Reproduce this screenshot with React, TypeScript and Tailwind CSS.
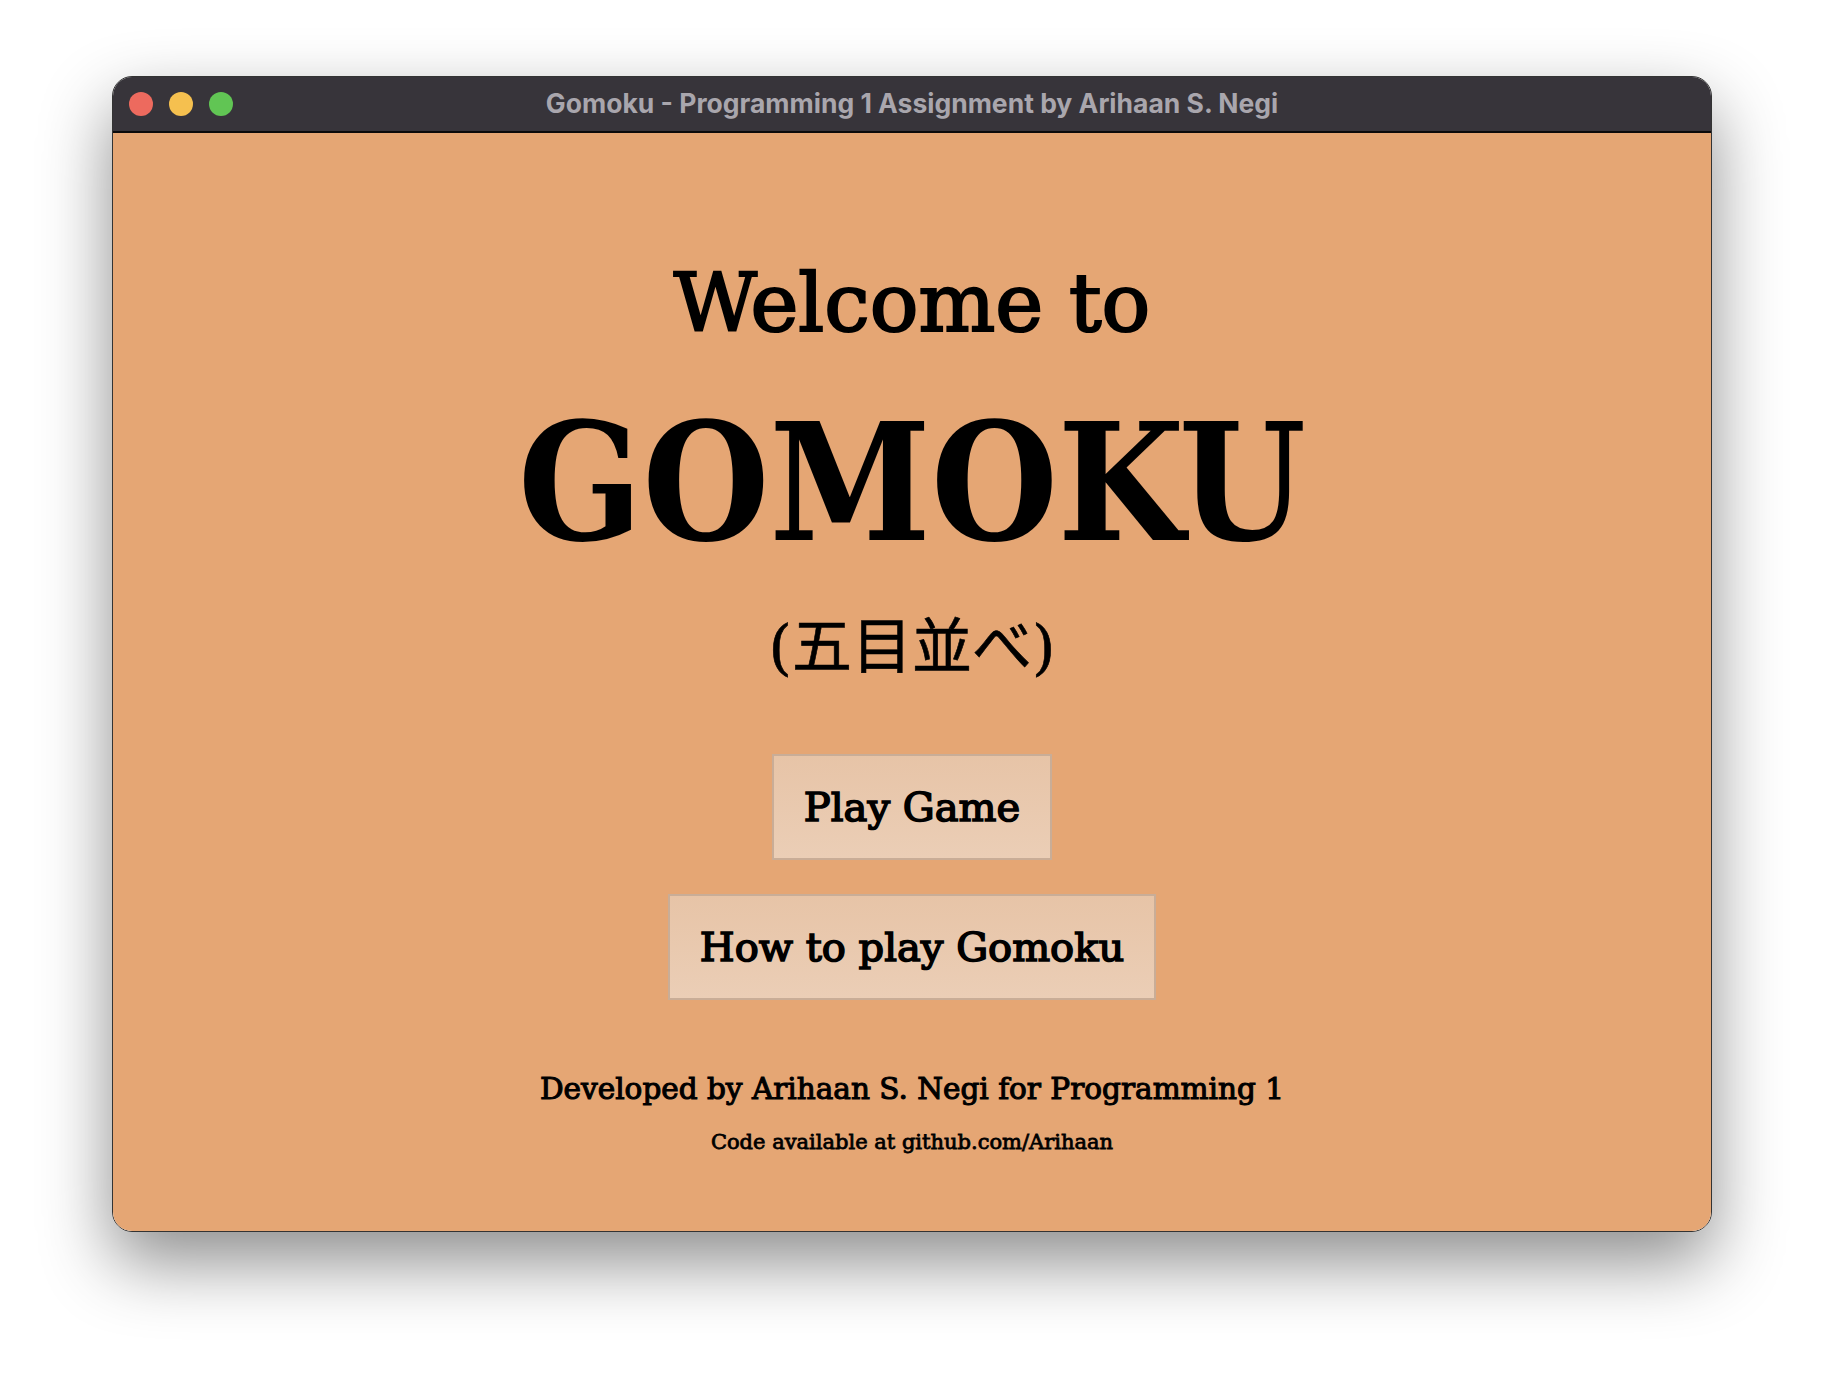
import React from 'react';

const slab = { fontFamily: '"DejaVu Serif", "Liberation Serif", serif' };

function TrafficLights() {
  return (
    <div className="flex items-center gap-[16px] pl-[16px]">
      <span className="h-[24px] w-[24px] rounded-full bg-[#ed6a5e]" />
      <span className="h-[24px] w-[24px] rounded-full bg-[#f5c04f]" />
      <span className="h-[24px] w-[24px] rounded-full bg-[#61c554]" />
    </div>
  );
}

function MenuButton({ label }: { label: string }) {
  return (
    <button
      className="h-[106px] border-2 border-[#c9ad97] bg-gradient-to-b from-[#e7c4a7] to-[#ebceb6] px-[30px] text-[40px] leading-none text-black [-webkit-text-stroke:1.6px_black]"
      style={slab}
    >
      {label}
    </button>
  );
}

export default function App() {
  return (
    <div className="h-[1380px] w-[1824px] bg-white px-[112px] pt-[76px]">
      <div className="flex h-[1156px] flex-col overflow-hidden rounded-[20px] border border-black/80 shadow-[0_30px_70px_rgba(0,0,0,0.45)]">
        <div className="grid h-[56px] shrink-0 grid-cols-[1fr_auto_1fr] items-center border-b-2 border-black/80 bg-[#37343a]">
          <TrafficLights />
          <p
            className="text-[26.5px] font-bold text-[#a9a6ad]"
            style={{ fontFamily: 'Inter, "Liberation Sans", sans-serif' }}
          >
            Gomoku - Programming 1 Assignment by Arihaan S. Negi
          </p>
          <div />
        </div>

        <main className="flex flex-1 flex-col items-center bg-[#e5a674] text-black">
          <h2 className="mt-[130px] text-[81px] leading-none [-webkit-text-stroke:2.2px_black]" style={slab}>
            Welcome to
          </h2>
          <h1
            className="mt-[58px] text-[162px] font-bold leading-none"
            style={{ fontFamily: '"DejaVu Serif Condensed", "DejaVu Serif", serif' }}
          >
            GOMOKU
          </h1>
          <p
            className="mt-[53px] text-[60px] leading-none [-webkit-text-stroke:0.6px_black]"
            style={{ fontFamily: '"DejaVu Serif", "Noto Sans CJK JP", serif' }}
          >
            (五目並べ)
          </p>

          <div className="mt-[77px] flex flex-col items-center gap-[34px]">
            <MenuButton label="Play Game" />
            <MenuButton label="How to play Gomoku" />
          </div>

          <p className="mt-[75px] text-[29.5px] leading-none [-webkit-text-stroke:1.1px_black]" style={slab}>
            Developed by Arihaan S. Negi for Programming 1
          </p>
          <p className="mt-[27px] text-[21px] leading-none [-webkit-text-stroke:0.8px_black]" style={slab}>
            Code available at github.com/Arihaan
          </p>
        </main>
      </div>
    </div>
  );
}
